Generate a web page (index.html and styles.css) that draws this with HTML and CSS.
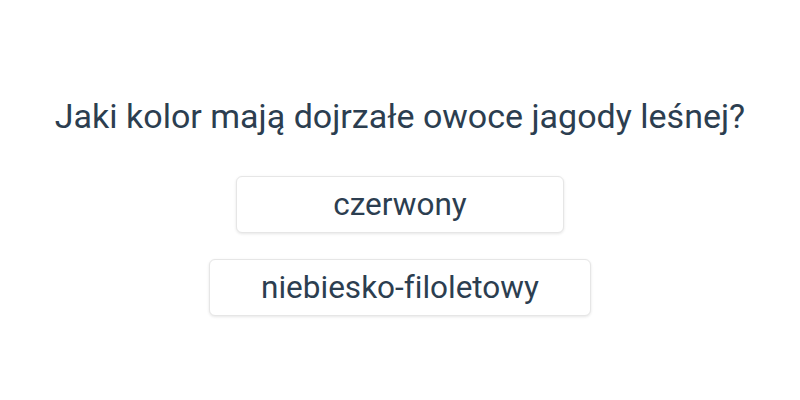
FILE: index.html
```html
<!DOCTYPE html>
<html lang="pl">
<head>
  <title>Quiz</title>
  <meta charset="utf-8">
  <meta name="viewport" content="width=device-width, initial-scale=1">
  <link rel="stylesheet" href="styles.css">
</head>
<body>
  <main class="quiz">
    <h1 class="quiz-question">Jaki kolor mają dojrzałe owoce jagody leśnej?</h1>
    <ul class="quiz-answers">
      <li><button class="quiz-answer">czerwony</button></li>
      <li><button class="quiz-answer">niebiesko-filoletowy</button></li>
    </ul>
  </main>
</body>
</html>
```

FILE: styles.css
```css
*, *::before, *::after {
  margin: 0;
  padding: 0;
  box-sizing: border-box;
}

body {
  min-height: 100vh;
  display: flex;
  justify-content: center;
  background-color: #FFFFFF;
  color: #2C3E50;
  font-family: "Roboto", sans-serif;
}

.quiz {
  padding-top: 96px;
  display: flex;
  flex-direction: column;
  align-items: center;
}

.quiz-question {
  font-size: 34px;
  font-weight: 400;
  line-height: 40px;
  white-space: nowrap;
}

.quiz-answers {
  margin-top: 40px;
  display: flex;
  flex-direction: column;
  align-items: center;
  gap: 26px;
  list-style: none;
}

.quiz-answer {
  display: block;
  min-width: 328px;
  height: 57px;
  padding: 0 51px;
  border: 1px solid #E6E6E6;
  border-radius: 6px;
  background-color: #FFFFFF;
  box-shadow: 0 1px 3px rgba(0, 0, 0, 0.1);
  color: inherit;
  font-family: inherit;
  font-size: 31.5px;
  font-variant-ligatures: none;
  cursor: pointer;
}
```
